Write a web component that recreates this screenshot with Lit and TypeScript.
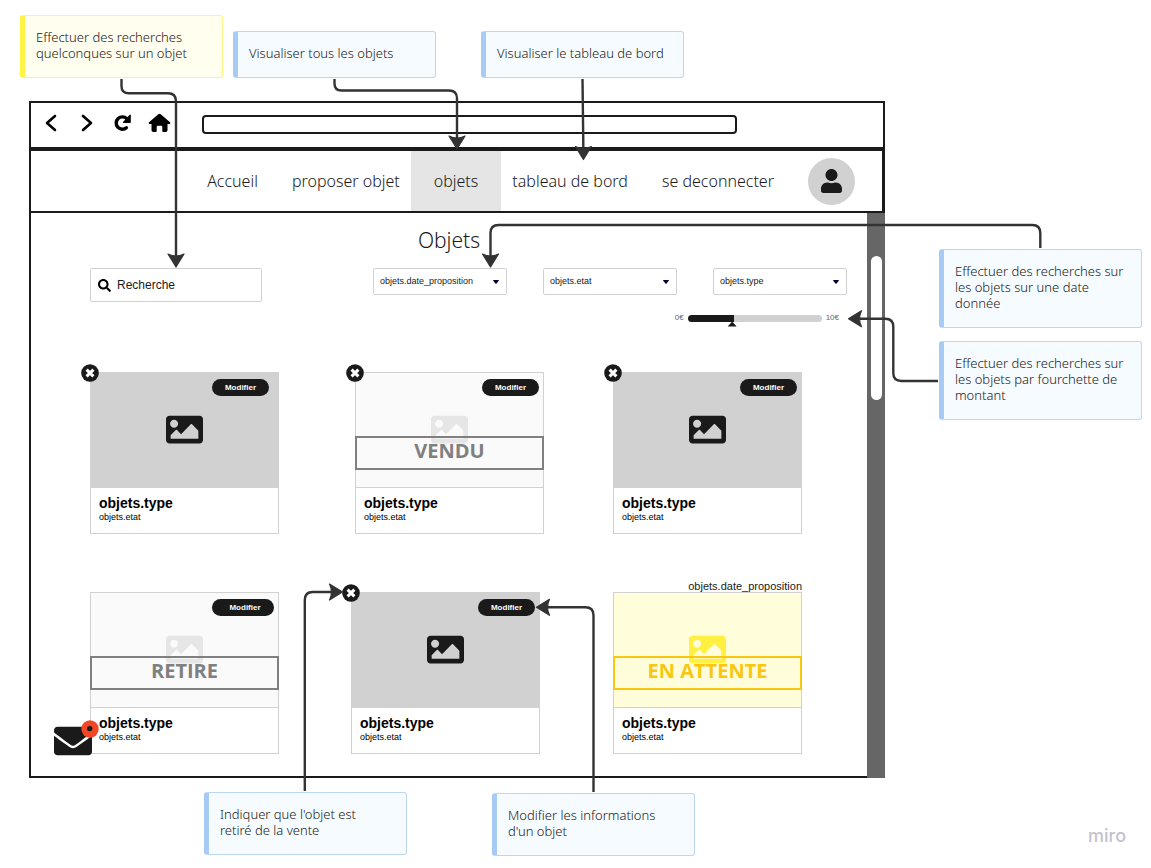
import { LitElement, html, css, svg, nothing } from "lit";
import { customElement, property } from "lit/decorators.js";
import { classMap } from "lit/directives/class-map.js";
import { styleMap } from "lit/directives/style-map.js";

const imagePath =
  "M464 448H48c-26.51 0-48-21.49-48-48V112c0-26.51 21.49-48 48-48h416c26.51 0 48 21.49 48 48v288c0 26.51-21.49 48-48 48zM112 120c-30.928 0-56 25.072-56 56s25.072 56 56 56 56-25.072 56-56-25.072-56-56-56zM64 384h384V272l-87.515-87.515c-4.686-4.686-12.284-4.686-16.971 0L208 320l-55.515-55.515c-4.686-4.686-12.284-4.686-16.971 0L64 336v48z";
const envelopePath =
  "M502.3 190.8c3.9-3.1 9.7-.2 9.7 4.7V400c0 26.5-21.5 48-48 48H48c-26.5 0-48-21.5-48-48V195.6c0-5 5.7-7.8 9.7-4.7 22.4 17.4 52.1 39.5 154.1 113.6 21.1 15.4 56.7 47.8 92.2 47.6 35.7.3 72-32.8 92.3-47.6 102-74.1 131.6-96.3 154-113.7zM256 320c23.2.4 56.6-29.2 73.4-41.4 132.7-96.3 142.8-104.7 173.4-128.7 5.8-4.5 9.2-11.5 9.2-18.9v-19c0-26.5-21.5-48-48-48H48c-26.5 0-48 21.5-48 48v19c0 7.4 3.4 14.3 9.2 18.9 30.6 23.9 40.7 32.4 173.4 128.7 16.8 12.2 50.2 41.8 73.4 41.4z";
const searchPath =
  "M505 442.7L405.3 343c-4.5-4.5-10.6-7-17-7H372c27.6-35.3 44-79.7 44-128C416 93.1 322.9 0 208 0S0 93.1 0 208s93.1 208 208 208c48.3 0 92.7-16.4 128-44v16.3c0 6.4 2.5 12.5 7 17l99.7 99.7c9.4 9.4 24.6 9.4 33.9 0l28.3-28.3c9.4-9.4 9.4-24.6.1-34zM208 336c-70.7 0-128-57.2-128-128 0-70.7 57.2-128 128-128 70.7 0 128 57.2 128 128 0 70.7-57.2 128-128 128z";
const userPath =
  "M224 256c70.7 0 128-57.3 128-128S294.7 0 224 0 96 57.3 96 128s57.3 128 128 128zm89.6 32h-16.7c-22.2 10.2-46.9 16-72.9 16s-50.6-5.8-72.9-16h-16.7C60.2 288 0 348.2 0 422.4V464c0 26.5 21.5 48 48 48h352c26.5 0 48-21.5 48-48v-41.6c0-74.2-60.2-134.4-134.4-134.4z";

type Status = "" | "sold" | "removed" | "pending";

/** One object of the catalogue. */
@customElement("object-card")
export class ObjectCard extends LitElement {
  @property() status: Status = "";
  @property() label = "";
  @property() date = "";
  @property({ type: Boolean }) removable = false;
  @property({ type: Boolean }) editable = false;
  @property({ type: Boolean }) inset = false;

  static styles = css`
    :host {
      display: block;
      width: 189px;
      font-family: "Liberation Sans", Arial, sans-serif;
      color: #000;
    }
    .date {
      font-size: 11px;
      line-height: 12px;
      text-align: right;
      color: #1a1a1a;
    }
    .card {
      position: relative;
      border: 1px solid #d1d1d1;
      background: #fff;
    }
    .picture {
      display: flex;
      align-items: center;
      justify-content: center;
      height: 112px;
      padding-bottom: 2px;
      background: #d1d1d1;
      color: #1a1a1a;
      border-bottom: 1px solid #d1d1d1;
    }
    .picture svg {
      width: 37px;
      height: 37px;
      fill: currentColor;
    }
    .sold .picture,
    .removed .picture {
      background: #fafafa;
      color: #e6e6e6;
    }
    .pending .picture {
      background: #fffdda;
      color: #fff042;
    }
    .caption {
      padding: 7px 8px 10px;
    }
    h2 {
      margin: 0;
      font-size: 14px;
      line-height: 17px;
      font-weight: 700;
    }
    p {
      margin: 0;
      font-size: 9px;
      line-height: 11px;
    }
    button {
      font: inherit;
      border: 0;
      padding: 0;
      cursor: pointer;
    }
    .edit {
      position: absolute;
      top: 6px;
      right: 4px;
      width: 57px;
      height: 17px;
      border-radius: 9px;
      background: #1a1a1a;
      color: #fff;
      font-size: 8px;
      line-height: 17px;
      font-weight: 700;
      text-align: center;
    }
    .inset .edit {
      right: 9px;
    }
    .removed .edit {
      width: 62px;
      padding-left: 4px;
    }
    .delete {
      position: absolute;
      top: -9px;
      left: -10px;
      width: 18px;
      height: 18px;
      background: none;
    }
    .delete svg {
      display: block;
      width: 18px;
      height: 18px;
    }
    .stamp {
      position: absolute;
      top: 63px;
      left: -1px;
      right: -1px;
      height: 34px;
      box-sizing: border-box;
      border: 2px solid #808080;
      color: #808080;
      font: 700 20px/26px "Open Sans", sans-serif;
      text-align: center;
    }
    .pending .stamp {
      border-color: #fac710;
      color: #fac710;
    }
  `;

  render() {
    return html`
      ${this.date ? html`<div class="date">${this.date}</div>` : nothing}
      <article class=${classMap({ card: true, inset: this.inset, [this.status || "available"]: true })}>
        <div class="picture">
          <svg viewBox="0 0 512 512" aria-hidden="true"><path d=${imagePath} /></svg>
        </div>
        <div class="caption">
          <h2>objets.type</h2>
          <p>objets.etat</p>
        </div>
        ${this.label ? html`<div class="stamp">${this.label}</div>` : nothing}
        ${this.editable ? html`<button class="edit" type="button">Modifier</button>` : nothing}
        ${this.removable
          ? html`<button class="delete" type="button" aria-label="Retirer">
              <svg viewBox="0 0 18 18">
                <circle cx="9" cy="9" r="8.8" fill="#1a1a1a" />
                <path d="M5.6 5.6l6.8 6.8M12.4 5.6l-6.8 6.8" stroke="#fff" stroke-width="3" />
              </svg>
            </button>`
          : nothing}
      </article>
    `;
  }
}

/** The wireframed browser window with the "Objets" page. */
@customElement("browser-window")
export class BrowserWindow extends LitElement {
  static styles = css`
    :host {
      display: block;
      background: #fff;
      color: #1a1a1a;
      font-family: "Noto Sans", "Open Sans", sans-serif;
    }
    button {
      border: 0;
      padding: 0;
      background: none;
      color: inherit;
      cursor: pointer;
    }
    svg {
      display: block;
    }
    .bar {
      display: flex;
      align-items: center;
      gap: 12px;
      height: 40px;
      padding: 0 146px 4px 8px;
      border: 2px solid #1a1a1a;
    }
    .bar button {
      width: 24px;
      height: 24px;
      color: #000;
    }
    .bar svg {
      width: 24px;
      height: 24px;
    }
    .address {
      flex: 1;
      min-width: 0;
      height: 19px;
      margin: 3px 0 0 19px;
      box-sizing: border-box;
      border: 2px solid #1a1a1a;
      border-radius: 4px;
      background: #fff;
    }
    .nav {
      display: flex;
      justify-content: flex-end;
      align-items: center;
      gap: 34px;
      height: 60px;
      padding-right: 27px;
      border: 2px solid #1a1a1a;
      border-right-width: 3px;
      font-size: 16px;
      font-weight: 300;
    }
    .nav a {
      color: inherit;
      text-decoration: none;
      line-height: 60px;
      white-space: nowrap;
    }
    .nav .active {
      padding: 0 23px;
      margin: 0 -23px;
      background: #e5e5e5;
    }
    .avatar {
      display: flex;
      align-items: center;
      justify-content: center;
      width: 47px;
      height: 47px;
      border-radius: 50%;
      background: #d1d1d1;
    }
    .avatar svg {
      width: 21px;
      height: 24px;
      fill: #1a1a1a;
    }
    .body {
      position: relative;
      display: flex;
    }
    .content {
      flex: 1;
      min-width: 0;
      padding: 13px 0 22px;
      border: solid #1a1a1a;
      border-width: 0 0 2px 2px;
    }
    h1 {
      margin: 0 0 14px;
      font-size: 21px;
      line-height: 28px;
      font-weight: 300;
      text-align: center;
    }
    .filters {
      display: flex;
      justify-content: space-between;
      align-items: flex-start;
      padding: 0 20px 0 59px;
      font-family: "Liberation Sans", Arial, sans-serif;
    }
    .search {
      display: flex;
      align-items: center;
      gap: 6px;
      width: 172px;
      height: 34px;
      box-sizing: border-box;
      padding: 0 7px;
      border: 1px solid #d1d1d1;
      border-radius: 2px;
    }
    .search svg {
      flex: none;
      width: 13px;
      height: 13px;
      fill: #000;
    }
    .search input {
      flex: 1;
      min-width: 0;
      padding: 0;
      border: 0;
      outline: 0;
      background: none;
      font: 12px/16px "Liberation Sans", Arial, sans-serif;
    }
    .search input::placeholder {
      color: #1a1a1a;
      opacity: 1;
    }
    .selects {
      display: flex;
      gap: 36px;
    }
    .select {
      position: relative;
      width: 134px;
    }
    .select select {
      display: block;
      width: 100%;
      height: 27px;
      box-sizing: border-box;
      appearance: none;
      padding: 0 20px 2px 6px;
      border: 1px solid #d1d1d1;
      border-radius: 2px;
      background: #fff;
      color: #1a1a1a;
      font: 9px/12px "Liberation Sans", Arial, sans-serif;
    }
    .select svg {
      position: absolute;
      right: 8px;
      top: 12px;
      width: 6px;
      height: 4px;
      fill: #050038;
      pointer-events: none;
    }
    .range {
      display: flex;
      justify-content: flex-end;
      align-items: center;
      gap: 4px;
      margin-top: 17px;
      padding-right: 8px;
      font-size: 8px;
      line-height: 12px;
      color: #666;
    }
    .range input {
      appearance: none;
      width: 134px;
      height: 7px;
      margin: 0;
      border-radius: 4px;
      background: linear-gradient(to right, #1a1a1a 34%, #d1d1d1 34%);
    }
    .range input::-webkit-slider-thumb {
      appearance: none;
      width: 9px;
      height: 5px;
      margin-top: 12px;
      background: #1a1a1a;
      clip-path: polygon(50% 0, 100% 100%, 0 100%);
    }
    .cards {
      display: flex;
      flex-direction: column;
      gap: 46px;
      padding: 48px 65px 0 59px;
    }
    .row {
      display: grid;
      align-items: end;
      justify-content: space-between;
      grid-template-columns: 261px 262px 189px;
    }
    .row.first {
      grid-template-columns: 265px 258px 189px;
    }
    .track {
      width: 18px;
      box-sizing: border-box;
      padding: 43px 3px 0 4px;
      background: #666;
    }
    .thumb {
      height: 144px;
      border-radius: 6px;
      background: #fff;
    }
    .mail {
      position: absolute;
      left: 25px;
      bottom: 14px;
      width: 46px;
      height: 44px;
    }
    .mail svg {
      width: 46px;
      height: 44px;
    }
  `;

  private filter(name: string) {
    return html`<div class="select">
      <select aria-label=${name}>
        <option>${name}</option>
      </select>
      <svg viewBox="0 0 6 4"><path d="M.3 0h5.4q.4.3 0 .8L3.6 3.4q-.6.6-1.2 0L.3.8Q-.1.3.3 0z" /></svg>
    </div>`;
  }

  render() {
    return html`
      <header class="bar">
        <button type="button" aria-label="Précédent">
          <svg viewBox="0 0 24 24" fill="none" stroke="#000" stroke-width="2.6" stroke-linecap="round" stroke-linejoin="round">
            <path d="M16 5L8 12l8 7" />
          </svg>
        </button>
        <button type="button" aria-label="Suivant">
          <svg viewBox="0 0 24 24" fill="none" stroke="#000" stroke-width="2.6" stroke-linecap="round" stroke-linejoin="round">
            <path d="M8 5l8 7-8 7" />
          </svg>
        </button>
        <button type="button" aria-label="Actualiser">
          <svg viewBox="0 0 24 24">
            <path d="M15.800 7.700A6.200 6.200 0 1 0 15.400 16.800" fill="none" stroke="#000" stroke-width="3.400" stroke-linecap="round" />
            <path d="M19.800 4.200v7q0 .8-.8.8h-6.600q-1-.2-.4-.9L18.700 3.800q1-.7 1.100.4z" />
          </svg>
        </button>
        <button type="button" aria-label="Accueil">
          <svg viewBox="0 0 24 24">
            <path d="M11.300 3.200q1.200-.8 2.400 0l9.300 8q.7.900-.1 1.800h-2.400v6.200q0 1.800-1.800 1.800h-2.500q-.9 0-.9-.9v-4.200q0-1.100-1.100-1.100h-3.400q-1.100 0-1.100 1.100v4.200q0 .9-.9.900H6.300q-1.800 0-1.800-1.800V13H2.100q-.8-.9-.1-1.800z" />
          </svg>
        </button>
        <input class="address" type="text" aria-label="Adresse" />
      </header>
      <nav class="nav">
        <a href="#accueil">Accueil</a>
        <a href="#proposer">proposer objet</a>
        <a href="#objets" class="active">objets</a>
        <a href="#tableau">tableau de bord</a>
        <a href="#deconnexion">se deconnecter</a>
        <button class="avatar" type="button" aria-label="Profil">
          <svg viewBox="0 0 448 512"><path d=${userPath} /></svg>
        </button>
      </nav>
      <div class="body">
        <main class="content">
          <h1>Objets</h1>
          <div class="filters">
            <label class="search">
              <svg viewBox="0 0 512 512" aria-hidden="true"><path d=${searchPath} /></svg>
              <input type="text" placeholder="Recherche" aria-label="Recherche" />
            </label>
            <div>
              <div class="selects">
                ${["objets.date_proposition", "objets.etat", "objets.type"].map((n) => this.filter(n))}
              </div>
              <div class="range">
                <span>0€</span>
                <input type="range" min="0" max="10" step="0.1" value="3.2" aria-label="Montant" />
                <span>10€</span>
              </div>
            </div>
          </div>
          <div class="cards">
            <div class="row first">
              <object-card removable editable inset></object-card>
              <object-card removable editable status="sold" label="VENDU"></object-card>
              <object-card removable editable></object-card>
            </div>
            <div class="row">
              <object-card editable status="removed" label="RETIRE"></object-card>
              <object-card removable editable></object-card>
              <object-card status="pending" label="EN ATTENTE" date="objets.date_proposition"></object-card>
            </div>
          </div>
        </main>
        <div class="track"><div class="thumb"></div></div>
        <button class="mail" type="button" aria-label="Messages">
          <svg viewBox="0 0 46 44">
            <g transform="translate(0 2) scale(.0742)"><path d=${envelopePath} fill="#1a1a1a" /></g>
            <circle cx="36" cy="9" r="8.700" fill="#f24726" />
            <circle cx="35.700" cy="8.600" r="2.700" fill="#1a1a1a" />
          </svg>
        </button>
      </div>
    `;
  }
}

interface Note {
  x: number;
  y: number;
  text: string;
  yellow?: boolean;
}

const notes: Note[] = [
  { x: 20, y: 15, text: "Effectuer des recherches quelconques sur un objet", yellow: true },
  { x: 233, y: 31, text: "Visualiser tous les objets" },
  { x: 481, y: 31, text: "Visualiser le tableau de bord" },
  { x: 939, y: 249, text: "Effectuer des recherches sur les objets sur une date donnée" },
  { x: 939, y: 341, text: "Effectuer des recherches sur les objets par fourchette de montant" },
  { x: 204, y: 792, text: "Indiquer que l'objet est retiré de la vente" },
  { x: 492, y: 793, text: "Modifier les informations d'un objet" },
];

/** Each connector: its line, the point of its arrow head and the head's rotation. */
const connectors = [
  { d: "M121.500 79V86q0 7.300 7.300 7.300H168q8 0 8 8V260", x: 176, y: 268, turn: 0 },
  { d: "M334.500 79V83.500q0 7 7 7H449q8 0 8 8V142", x: 457, y: 150, turn: 0 },
  { d: "M582.500 79L583.400 152", x: 583.4, y: 160.5, turn: 0 },
  { d: "M1040.300 248V233q0-8-8-8H498.500q-8 0-8 8V260", x: 490.5, y: 268, turn: 0 },
  { d: "M938 381H901.300q-8 0-8-8V326.700q0-8-8-8H856", x: 847.5, y: 318.7, turn: 90 },
  { d: "M304.800 791V600q0-8 8-8H335", x: 343.5, y: 592, turn: -90 },
  { d: "M593.500 792V615.300q0-8-8-8H544", x: 535.5, y: 607.3, turn: 90 },
];

@customElement("app-root")
export class AppRoot extends LitElement {
  static styles = css`
    :host {
      display: block;
      position: relative;
      min-height: 100vh;
      overflow: hidden;
      background: #fff;
      font-family: "Noto Sans", "Open Sans", sans-serif;
    }
    .window {
      position: absolute;
      left: 29px;
      top: 101px;
      width: 856px;
    }
    .connectors {
      position: absolute;
      left: 0;
      top: 0;
      width: 1151px;
      height: 868px;
      pointer-events: none;
    }
    .note {
      position: absolute;
      width: 203px;
      box-sizing: border-box;
      padding: 13px 16px 16px 11px;
      border: 1px solid #bdd7f3;
      border-left: 5px solid #a6ccf5;
      border-radius: 3px;
      background: #f6fbff;
      color: #1a1a1a;
      font-size: 13px;
      line-height: 16px;
      font-weight: 300;
    }
    .note.yellow {
      border-color: #fff482;
      border-left-color: #fff445;
      background: #fffeef;
    }
    .brand {
      position: absolute;
      right: 25px;
      bottom: 21px;
      color: #c3c2cf;
      font: 500 18px/22px Inter, sans-serif;
    }
  `;

  render() {
    return html`
      <browser-window class="window"></browser-window>
      ${notes.map(
        (n) => html`<div
          class=${classMap({ note: true, yellow: !!n.yellow })}
          style=${styleMap({ left: `${n.x}px`, top: `${n.y}px` })}
        >
          ${n.text}
        </div>`
      )}
      <svg class="connectors" viewBox="0 0 1151 868" aria-hidden="true">
        ${connectors.map(
          (c) => svg`
            <path d=${c.d} fill="none" stroke="#333" stroke-width="2.400" />
            <path
              d="M0-1L-8-14Q-4-12 0-12Q4-12 8-14Z"
              transform="translate(${c.x} ${c.y}) rotate(${c.turn})"
              fill="#333" stroke="#333" stroke-width="1.200" stroke-linejoin="round"
            />`
        )}
      </svg>
      <div class="brand">miro</div>
    `;
  }
}
